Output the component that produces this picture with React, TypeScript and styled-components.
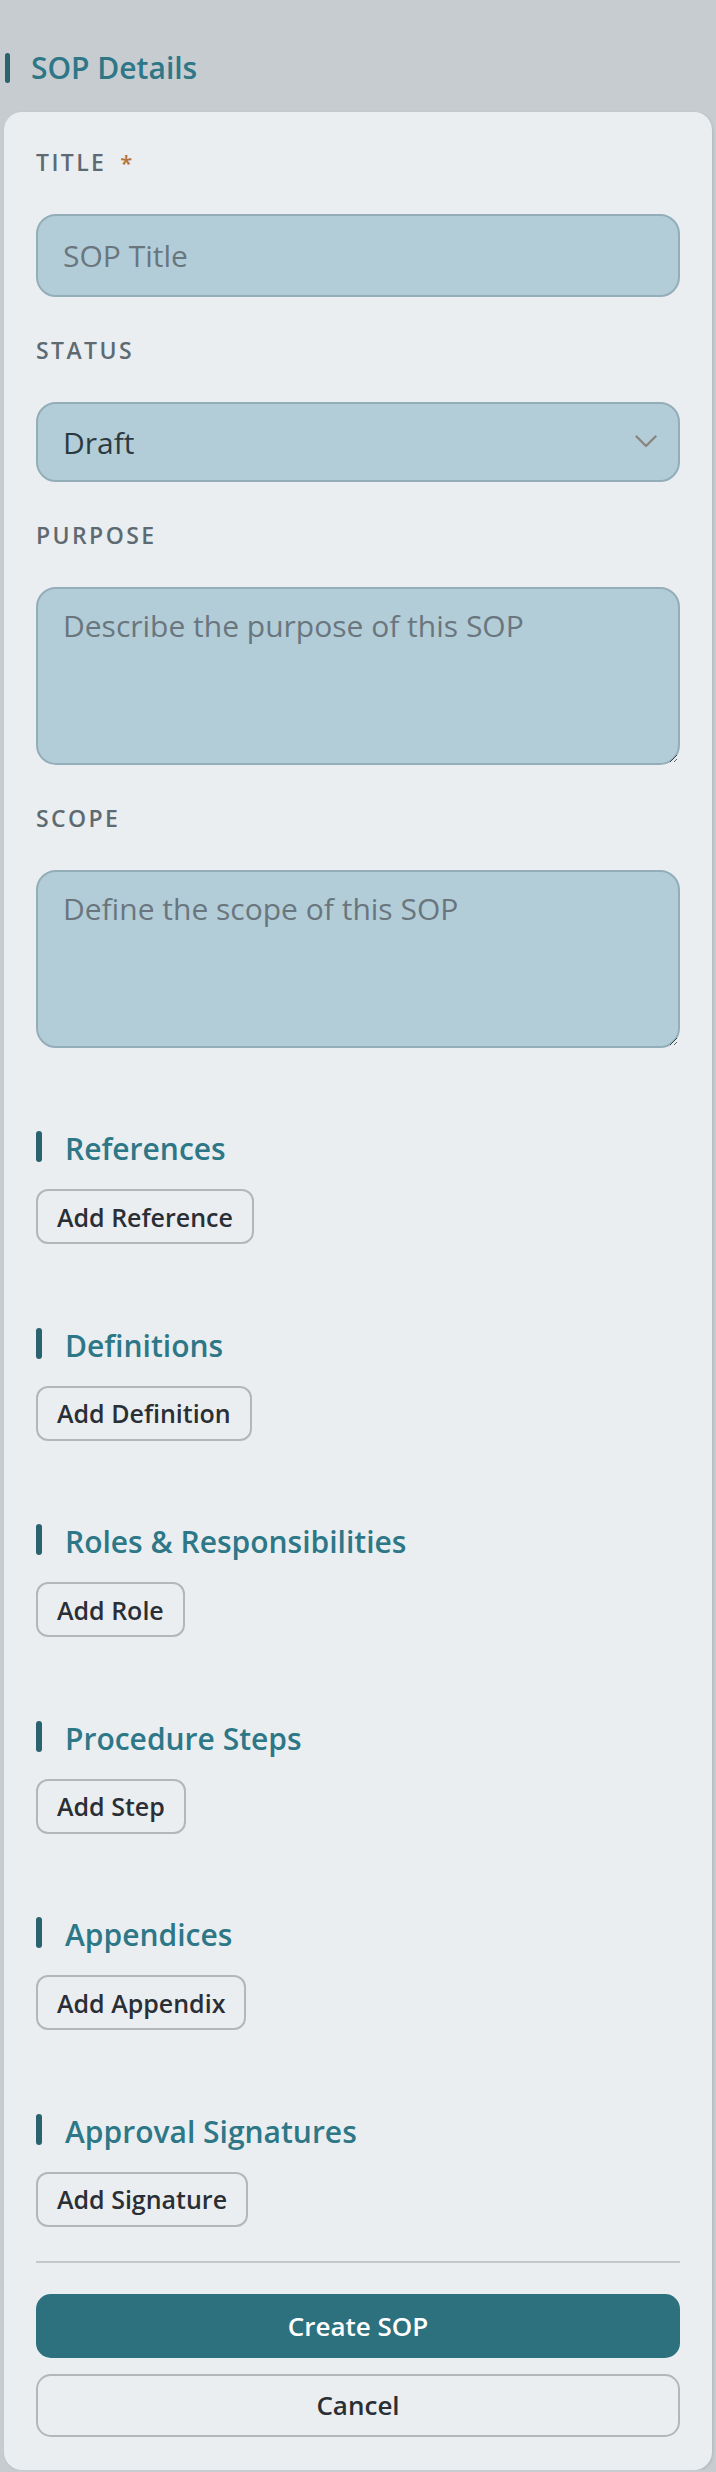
import React from "react";
import styled, { createGlobalStyle } from "styled-components";

const GlobalStyle = createGlobalStyle`
  html, body {
    margin: 0;
    padding: 0;
    background: #c7ccd0;
    font-family: "Open Sans", "Noto Sans", "Liberation Sans", sans-serif;
  }
  * { box-sizing: border-box; }
`;

const Page = styled.div`
  padding-top: 53px;
  display: flex;
  flex-direction: column;
`;

const PageHeader = styled.div`
  display: flex;
  align-items: center;
  gap: 21px;
  height: 30px;
  padding-left: 5px;
  margin-bottom: 29px;
`;

const AccentBar = styled.span<{ $w: number; $h: number }>`
  display: block;
  flex: none;
  width: ${(p) => p.$w}px;
  height: ${(p) => p.$h}px;
  border-radius: 3px;
  background: #28636f;
`;

const HeaderTitle = styled.h2`
  margin: 0;
  font-size: 30px;
  line-height: 30px;
  font-weight: 600;
  color: #2d7787;
`;

const Card = styled.form`
  margin: 0 4px;
  background: #eaeef1;
  border-radius: 18px;
  padding: 35px 32px 33px;
  display: flex;
  flex-direction: column;
  box-shadow: 1px 1px 3px rgba(0, 0, 0, 0.1);
`;

const Field = styled.div<{ $last?: boolean }>`
  display: flex;
  flex-direction: column;
  margin-bottom: ${(p) => (p.$last ? 0 : 38)}px;
`;

const Label = styled.label`
  display: flex;
  align-items: center;
  font-size: 23px;
  line-height: 31px;
  font-weight: 600;
  letter-spacing: 2.4px;
  color: #5e6a72;
  margin-bottom: 36px;
`;

const Required = styled.span`
  color: #b7733a;
  margin-left: 14px;
  font-size: 22px;
`;

const inputBase = `
  width: 100%;
  background: #b3cdd8;
  border: 2px solid #93adb9;
  border-radius: 20px;
  font-family: "Open Sans", "Noto Sans", "Liberation Sans", sans-serif;
  font-size: 30px;
  color: #2b3a41;
  outline: none;
`;

const TextInput = styled.input`
  ${inputBase}
  height: 83px;
  padding: 0 25px;
  &::placeholder { color: #6a767e; opacity: 1; }
`;

const SelectWrap = styled.div`
  position: relative;
`;

const Select = styled.select`
  ${inputBase}
  appearance: none;
  -webkit-appearance: none;
  height: 80px;
  padding: 0 60px 0 25px;
`;

const Chevron = styled.svg`
  position: absolute;
  right: 23px;
  top: 33px;
  width: 22px;
  height: 13px;
  pointer-events: none;
`;

const TextArea = styled.textarea`
  ${inputBase}
  height: 178px;
  padding: 14px 25px;
  line-height: 1.5;
  resize: vertical;
  &::placeholder { color: #6a767e; opacity: 1; }
`;

const Section = styled.section`
  display: flex;
  flex-direction: column;
  align-items: flex-start;
  margin-top: 83px;
  & + & { margin-top: 83.5px; }
`;

const SectionHeader = styled.div`
  display: flex;
  align-items: center;
  gap: 23px;
  height: 31px;
  margin-bottom: 27px;
`;

const SectionTitle = styled.h3`
  margin: 0;
  font-size: 30px;
  line-height: 31px;
  font-weight: 600;
  color: #2d7787;
  padding-top: 4px;
`;

const OutlineButton = styled.button<{ $block?: boolean }>`
  display: flex;
  align-items: center;
  justify-content: center;
  height: ${(p) => (p.$block ? 63 : 55)}px;
  width: ${(p) => (p.$block ? "100%" : "auto")};
  padding: 0 19px;
  background: transparent;
  border: 2px solid #b4b7ba;
  border-radius: ${(p) => (p.$block ? 15 : 12)}px;
  font-family: "Open Sans", "Noto Sans", "Liberation Sans", sans-serif;
  font-size: ${(p) => (p.$block ? 26 : 25)}px;
  font-weight: 600;
  color: #2a2f35;
  cursor: pointer;
`;

const Divider = styled.hr`
  border: none;
  height: 2px;
  background: #c4c8cb;
  margin: 34px 0 31px;
  width: 100%;
`;

const PrimaryButton = styled.button`
  display: flex;
  align-items: center;
  justify-content: center;
  height: 64px;
  width: 100%;
  border: none;
  border-radius: 15px;
  background: #2d717f;
  color: #ffffff;
  font-family: "Open Sans", "Noto Sans", "Liberation Sans", sans-serif;
  font-size: 26px;
  font-weight: 600;
  margin-bottom: 16px;
  cursor: pointer;
`;

const sections = [
  { title: "References", action: "Add Reference" },
  { title: "Definitions", action: "Add Definition" },
  { title: "Roles & Responsibilities", action: "Add Role" },
  { title: "Procedure Steps", action: "Add Step" },
  { title: "Appendices", action: "Add Appendix" },
  { title: "Approval Signatures", action: "Add Signature" },
];

export default function App() {
  return (
    <>
      <GlobalStyle />
      <Page>
        <PageHeader>
          <AccentBar $w={5} $h={30} />
          <HeaderTitle>SOP Details</HeaderTitle>
        </PageHeader>
        <Card onSubmit={(e) => e.preventDefault()}>
          <Field>
            <Label htmlFor="title">
              TITLE<Required>*</Required>
            </Label>
            <TextInput id="title" placeholder="SOP Title" />
          </Field>
          <Field>
            <Label htmlFor="status">STATUS</Label>
            <SelectWrap>
              <Select id="status" defaultValue="draft">
                <option value="draft">Draft</option>
                <option value="review">In Review</option>
                <option value="approved">Approved</option>
              </Select>
              <Chevron viewBox="0 0 22 13" fill="none">
                <polyline points="1.5,1.5 11,11 20.5,1.5" stroke="#8a8480" strokeWidth="2.4" strokeLinecap="round" strokeLinejoin="round" />
              </Chevron>
            </SelectWrap>
          </Field>
          <Field>
            <Label htmlFor="purpose">PURPOSE</Label>
            <TextArea id="purpose" placeholder="Describe the purpose of this SOP" />
          </Field>
          <Field $last>
            <Label htmlFor="scope">SCOPE</Label>
            <TextArea id="scope" placeholder="Define the scope of this SOP" />
          </Field>
          {sections.map((s) => (
            <Section key={s.title}>
              <SectionHeader>
                <AccentBar $w={6} $h={31} />
                <SectionTitle>{s.title}</SectionTitle>
              </SectionHeader>
              <OutlineButton type="button">{s.action}</OutlineButton>
            </Section>
          ))}
          <Divider />
          <PrimaryButton type="submit">Create SOP</PrimaryButton>
          <OutlineButton type="button" $block>
            Cancel
          </OutlineButton>
        </Card>
      </Page>
    </>
  );
}
